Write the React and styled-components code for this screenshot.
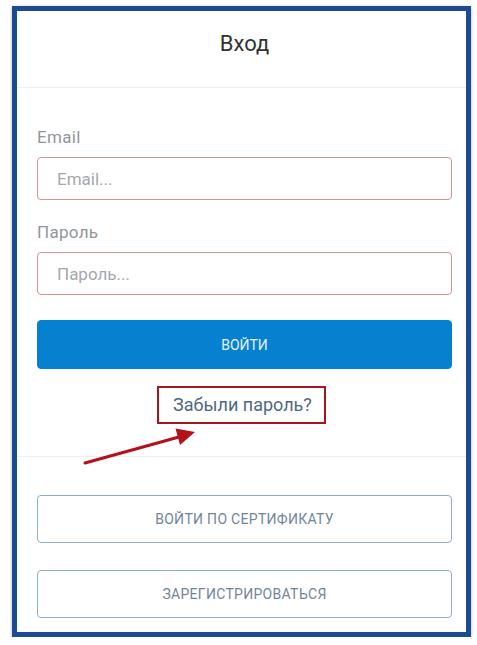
import styled, { createGlobalStyle } from 'styled-components'

const GlobalStyle = createGlobalStyle`
	body {
		margin: 0;
		background: #fff;
		font-family: Roboto, "Liberation Sans", sans-serif;
	}
`

const Frame = styled.div`
	position: relative;
	box-sizing: border-box;
	width: 459px;
	margin: 6px 0 0 12px;
	border: 5px solid #1c4b96;
	box-shadow: 0 1px 3px rgba(0, 0, 0, .3);
	background: #fff;
	display: flex;
	flex-direction: column;
`

const Header = styled.div`
	height: 77px;
	box-sizing: border-box;
	padding: 21px 14px 0 20px;
	border-bottom: 1px solid #eceeef;
	display: flex;
	justify-content: center;
`

const Title = styled.h1`
	margin: 0;
	font-size: 22px;
	line-height: 24px;
	font-weight: 400;
	color: #333;
`

const Section = styled.div`
	display: flex;
	flex-direction: column;
	padding: ${(p) => p.$pad};
	border-bottom: ${(p) => (p.$divider ? '1px solid #eceeef' : 'none')};
`

const Label = styled.label`
	font-size: 17px;
	line-height: 20px;
	letter-spacing: .3px;
	color: #90969c;
	margin-bottom: 10px;
`

const Input = styled.input`
	box-sizing: border-box;
	height: 43px;
	margin: 0 0 ${(p) => p.$mb || 0}px;
	padding: 0 19px;
	border: 1px solid #dc8f94;
	border-radius: 4px;
	font-family: inherit;
	font-size: 17px;
	color: #333;
	outline: none;

	&::placeholder {
		color: #a3a8ad;
	}
`

const Button = styled.button`
	box-sizing: border-box;
	height: ${(p) => (p.$primary ? 49 : 48)}px;
	margin-top: ${(p) => p.$mt || 0}px;
	border-radius: 4px;
	border: 1px solid ${(p) => (p.$primary ? '#0681cf' : '#8fb0c7')};
	background: ${(p) => (p.$primary ? '#0681cf' : '#fff')};
	color: ${(p) => (p.$primary ? '#e8f3fb' : '#71859a')};
	font-family: inherit;
	font-size: 14px;
	text-transform: uppercase;
	letter-spacing: ${(p) => (p.$primary ? 0 : 0.3)}px;
	cursor: pointer;
`

const LinkRow = styled.div`
	display: flex;
	justify-content: center;
	margin-top: 17px;
`

const Highlight = styled.a`
	box-sizing: border-box;
	height: 38px;
	padding: 0 12px 0 14px;
	border: 2px solid #a3171f;
	font-size: 18px;
	line-height: 34px;
	color: #4d6981;
	text-decoration: none;
	margin-left: -6px;
`

const Arrow = styled.svg`
	position: absolute;
	left: 58px;
	top: 409px;
	overflow: visible;
`

export default function App() {
	return <>
		<GlobalStyle />
		<Frame>
			<Header>
				<Title>Вход</Title>
			</Header>

			<Section $pad="39px 14px 32px 20px" $divider>
				<Label>Email</Label>
				<Input placeholder="Email..." $mb={22} />
				<Label>Пароль</Label>
				<Input type="password" placeholder="Пароль..." />
				<Button $primary $mt={25}>Войти</Button>
				<LinkRow>
					<Highlight href="#">Забыли пароль?</Highlight>
				</LinkRow>
			</Section>

			<Section $pad="38px 14px 14px 20px">
				<Button>Войти по сертификату</Button>
				<Button $mt={27}>Зарегистрироваться</Button>
			</Section>

			<Arrow width="125" height="50" viewBox="0 0 125 50">
				<line x1="10" y1="43" x2="104" y2="17" stroke="#b3121b" strokeWidth="3" strokeLinecap="round" />
				<polygon points="120,12 105,25 100.5,8.5" fill="#b3121b" />
			</Arrow>
		</Frame>
	</>
}
